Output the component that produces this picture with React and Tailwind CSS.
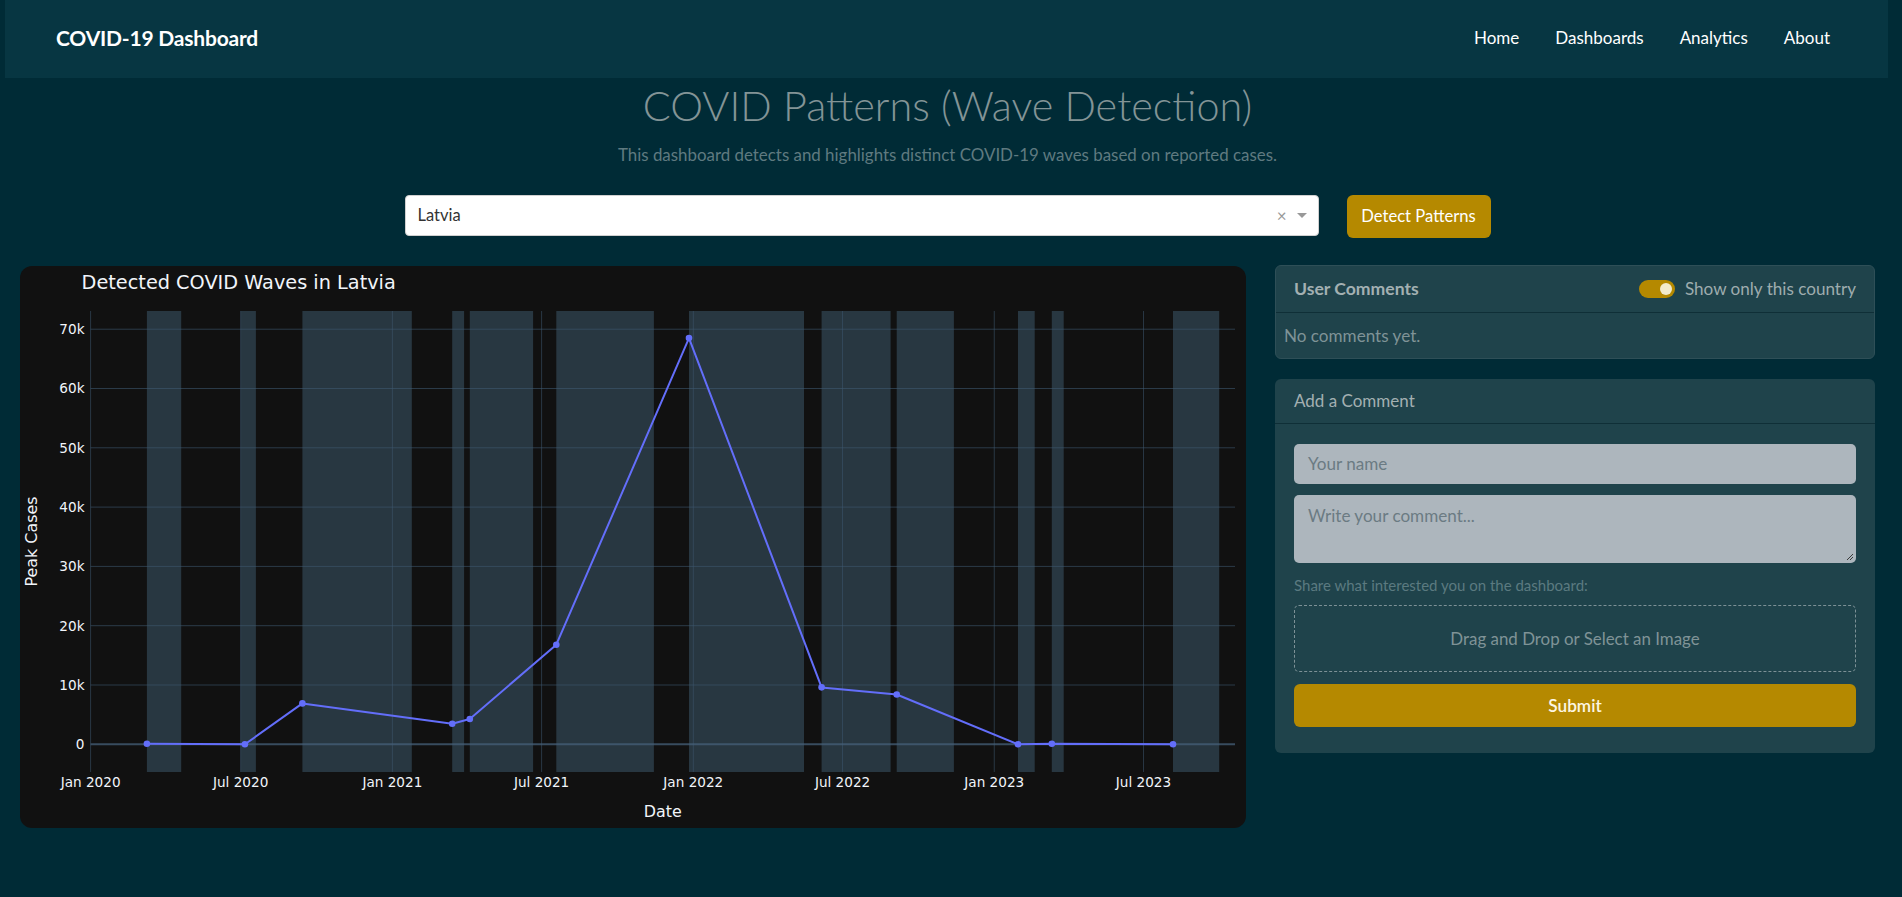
import React from "react";

const X0 = 70.6;
const PX_DAY = 0.8245;
const Y0 = 478.3;
const PER10K = 59.3;
const PLOT_L = 70.6;
const PLOT_R = 1215;
const PLOT_T = 45;
const PLOT_B = 506;

const dayOf = (y, m) => (Date.UTC(y, m, 1) - Date.UTC(2020, 0, 1)) / 86400000;
const xd = (y, m) => X0 + dayOf(y, m) * PX_DAY;
const yv = (v) => Y0 - (v / 10000) * PER10K;

const xTicks = [
  ["Jan 2020", 2020, 0],
  ["Jul 2020", 2020, 6],
  ["Jan 2021", 2021, 0],
  ["Jul 2021", 2021, 6],
  ["Jan 2022", 2022, 0],
  ["Jul 2022", 2022, 6],
  ["Jan 2023", 2023, 0],
  ["Jul 2023", 2023, 6],
];

const yTicks = [0, 10000, 20000, 30000, 40000, 50000, 60000, 70000];

const waves = [
  [126.9, 161.2],
  [220.8, 235.9],
  [282.4, 391.8],
  [432.2, 444.1],
  [449.8, 513.1],
  [536.3, 633.9],
  [669, 784],
  [801.6, 870.6],
  [876.7, 933.9],
  [998, 1014.7],
  [1031.8, 1043.7],
  [1153, 1199.2],
];

const points = [
  [126.9, 100],
  [224.9, 0],
  [282.4, 6900],
  [432.2, 3470],
  [449.8, 4270],
  [536.3, 16800],
  [669, 68500],
  [801.6, 9600],
  [876.7, 8400],
  [998, 0],
  [1031.8, 100],
  [1153, 0],
];

function WaveChart() {
  const font = "'DejaVu Sans', Verdana, sans-serif";
  const path = points.map(([x, v], i) => `${i ? "L" : "M"}${x},${yv(v).toFixed(1)}`).join(" ");
  return (
    <svg width="1226" height="562" viewBox="0 0 1226 562" className="block">
      {waves.map(([a, b], i) => (
        <rect key={i} x={a} y={PLOT_T} width={b - a} height={PLOT_B - PLOT_T} fill="#283741" />
      ))}
      {xTicks.map(([, y, m], i) => (
        <line key={i} x1={xd(y, m)} x2={xd(y, m)} y1={PLOT_T} y2={PLOT_B} stroke="rgba(62,88,112,0.55)" strokeWidth="1" />
      ))}
      {yTicks.map((v) => (
        <line
          key={v}
          x1={PLOT_L}
          x2={PLOT_R}
          y1={yv(v)}
          y2={yv(v)}
          stroke={v === 0 ? "rgba(70,96,122,0.75)" : "rgba(62,88,112,0.6)"}
          strokeWidth={v === 0 ? 2 : 1}
        />
      ))}
      <path d={path} fill="none" stroke="#636efa" strokeWidth="2" strokeLinejoin="round" />
      {points.map(([x, v], i) => (
        <circle key={i} cx={x} cy={yv(v)} r="3.3" fill="#636efa" />
      ))}
      {yTicks.map((v) => (
        <text key={v} x="64.5" y={yv(v) + 4.9} textAnchor="end" fontFamily={font} fontSize="13.6" fill="#f2f5fa">
          {v === 0 ? "0" : `${v / 1000}k`}
        </text>
      ))}
      {xTicks.map(([label, y, m]) => (
        <text key={label} x={xd(y, m)} y="520.5" textAnchor="middle" fontFamily={font} fontSize="13.6" fill="#f2f5fa">
          {label}
        </text>
      ))}
      <text x="61.6" y="22.5" fontFamily={font} fontSize="19.3" fill="#f2f5fa">
        Detected COVID Waves in Latvia
      </text>
      <text
        x="0"
        y="0"
        transform={`translate(17, ${(PLOT_T + PLOT_B) / 2}) rotate(-90)`}
        textAnchor="middle"
        fontFamily={font}
        fontSize="15.9"
        fill="#f2f5fa"
      >
        Peak Cases
      </text>
      <text x={(PLOT_L + PLOT_R) / 2} y="550.5" textAnchor="middle" fontFamily={font} fontSize="15.9" fill="#f2f5fa">
        Date
      </text>
    </svg>
  );
}

export default function App() {
  return (
    <div className="min-h-screen bg-[#002b36] font-[Lato,'Noto_Sans',sans-serif]">
      <nav className="ml-[5px] mr-[14px] h-[78px] bg-[#073642] flex items-center justify-between pl-[51px] pr-[58px] pb-[2px]">
        <div className="text-white font-bold text-[21px] tracking-[-0.2px]">COVID-19 Dashboard</div>
        <div className="flex items-center gap-[36px] text-white text-[17px]">
          <span>Home</span>
          <span>Dashboards</span>
          <span>Analytics</span>
          <span>About</span>
        </div>
      </nav>

      <main className="pl-[20px] pr-[27px]">
        <h1 className="mt-[2px] h-[50px] leading-[50px] text-center text-[41.4px] font-light text-[#839496]">
          COVID Patterns (Wave Detection)
        </h1>
        <p className="mt-[13px] h-[24px] leading-[24px] text-center text-[16.9px] text-[#5f7a80]">
          This dashboard detects and highlights distinct COVID-19 waves based on reported cases.
        </p>

        <div className="mt-[28px] flex justify-center items-start gap-[28px]">
          <div className="w-[914px] h-[41px] bg-white rounded-[4px] border border-[#d0d0d0] flex items-center pl-[12px] pr-[11px]">
            <span className="flex-1 text-[16.5px] text-[#333]">Latvia</span>
            <span className="text-[#999] text-[17px] leading-none mr-[10px]">×</span>
            <span className="w-0 h-0 border-l-[5px] border-r-[5px] border-t-[5px] border-l-transparent border-r-transparent border-t-[#999]" />
          </div>
          <button className="w-[144px] h-[43px] rounded-[6px] bg-[#b58900] text-white text-[16.6px]">
            Detect Patterns
          </button>
        </div>

        <div className="mt-[27px] flex items-start gap-[29px]">
          <div className="mt-[1px] w-[1226px] h-[562px] rounded-[12px] bg-[#111111] overflow-hidden shrink-0">
            <WaveChart />
          </div>

          <div className="w-[600px] flex flex-col gap-[20px]">
            <div className="rounded-[6px] bg-[#1f434b] border border-[#2e4f57]">
              <div className="h-[47px] px-[18px] flex items-center justify-between border-b border-[#0f2f37]">
                <span className="font-bold text-[17.6px] text-[#a3b0b2]">User Comments</span>
                <div className="flex items-center gap-[10px]">
                  <span className="w-[36px] h-[18px] rounded-full bg-[#b58900] flex items-center justify-end pr-[3px]">
                    <span className="w-[12px] h-[12px] rounded-full bg-[#f3ebcb]" />
                  </span>
                  <span className="text-[17.1px] text-[#9eacae]">Show only this country</span>
                </div>
              </div>
              <div className="h-[45px] px-[8px] flex items-center text-[17.1px] text-[#7f9397]">No comments yet.</div>
            </div>

            <div className="rounded-[6px] bg-[#1f434b]">
              <div className="h-[45px] px-[19px] flex items-center border-b border-[#0f2f37] text-[17px] text-[#a3b0b2]">
                Add a Comment
              </div>
              <div className="px-[19px] pt-[20px] pb-[26px] flex flex-col">
                <div className="h-[40px] rounded-[5px] bg-[#adb6bd] flex items-center px-[14px] text-[17.1px] text-[#6b7b83]">
                  Your name
                </div>
                <div className="mt-[11px] h-[68px] rounded-[5px] bg-[#adb6bd] px-[14px] pt-[8px] text-[17.1px] text-[#6b7b83] relative">
                  Write your comment...
                  <svg className="absolute right-[2px] bottom-[2px]" width="8" height="8" viewBox="0 0 8 8">
                    <path d="M7 1 L1 7 M7 4 L4 7" stroke="#3a3a3a" strokeWidth="1" />
                  </svg>
                </div>
                <div className="mt-[12px] h-[20px] leading-[20px] text-[15px] text-[#5b7a80]">
                  Share what interested you on the dashboard:
                </div>
                <div className="mt-[10px] h-[67px] rounded-[5px] border border-dashed border-[#7d9196] flex items-center justify-center text-[16.9px] text-[#7f9397]">
                  Drag and Drop or Select an Image
                </div>
                <button className="mt-[12px] h-[43px] rounded-[6px] bg-[#b58900] text-[#fdf6e3] text-[17.2px] font-semibold">
                  Submit
                </button>
              </div>
            </div>
          </div>
        </div>
      </main>
    </div>
  );
}
